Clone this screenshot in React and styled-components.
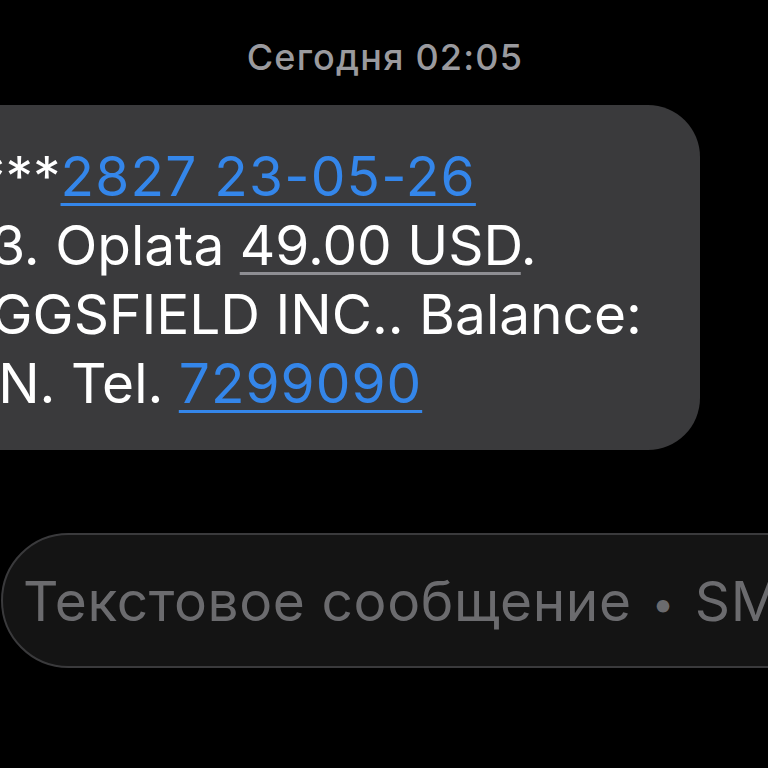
import styled, {createGlobalStyle} from 'styled-components';

//Page basics
const GlobalStyle = createGlobalStyle`
    html, body{
        margin:0;
        padding:0;
        background:#000;
        overflow:hidden;
    }
    body{
        font-family:Inter, "Noto Sans", "Liberation Sans", sans-serif;
        -webkit-font-smoothing:antialiased;
    }
`;

//Message lines, the start of each one runs past the left edge
const lines = [
    [{text:'Karta: ***'}, {text:'2827 23-05-26', kind:'date'}],
    [{text:'at 02:03. Oplata '}, {text:'49.00 USD', kind:'data'}, {text:'.'}],
    [{text:'POS HIGGSFIELD INC.. Balance:'}],
    [{text:'11.0 MLN. Tel. '}, {text:'7299090', kind:'link'}],
];

const App = () => {
    return(
        <Screen>
            <GlobalStyle/>
            <Stamp>Сегодня 02:05</Stamp>
            <Bubble>
                {lines.map((line, i) => (
                    <Line key={i}>
                        {line.map((part, j) => (
                            <Part key={j} $kind={part.kind}>{part.text}</Part>
                        ))}
                    </Line>
                ))}
            </Bubble>
            <Composer>
                <Placeholder>Текстовое сообщение <Dot>•</Dot> SMS</Placeholder>
            </Composer>
        </Screen>
    );
};

const Screen = styled.div`
    width:768px;
    height:768px;
    overflow:hidden;
    display:flex;
    flex-direction:column;
    background:#000;
`;

const Stamp = styled.div`
    padding-top:35px;
    text-align:center;
    font-size:36px;
    line-height:44px;
    font-weight:500;
    letter-spacing:1.2px;
    color:#9a9a9e;
    padding-left:2px;
`;

const Bubble = styled.div`
    margin-top:26px;
    margin-left:-232px;
    width:932px;
    box-sizing:border-box;
    padding:37px 40px 32px 40px;
    background:#3a3a3c;
    border-radius:52px;
    color:#fff;
    font-size:55px;
    line-height:69px;
    white-space:nowrap;
`;

const Line = styled.div`
    text-align:left;
`;

const Part = styled.span`
    color:${p => (p.$kind === 'link' || p.$kind === 'date') ? '#3486ea' : '#fff'};
    letter-spacing:${p => p.$kind === 'date' ? '1.2px' : p.$kind === 'link' ? '1px' : '0'};
    text-decoration:${p => p.$kind ? 'underline' : 'none'};
    text-decoration-color:${p => p.$kind === 'data' ? '#8e8e93' : '#3486ea'};
    text-decoration-thickness:3px;
    text-underline-offset:7px;
`;

const Composer = styled.div`
    margin-top:83px;
    margin-left:1px;
    width:900px;
    height:135px;
    box-sizing:border-box;
    border:2px solid #3a3a3c;
    border-radius:68px;
    background:#141414;
    display:flex;
    align-items:center;
    padding-left:20px;
    overflow:hidden;
`;

const Placeholder = styled.span`
    font-size:55px;
    letter-spacing:0.6px;
    color:#6b6b6e;
    white-space:nowrap;
`;

const Dot = styled.span`
    font-size:40px;
    margin:0 4px;
    vertical-align:3px;
`;

export default App;
